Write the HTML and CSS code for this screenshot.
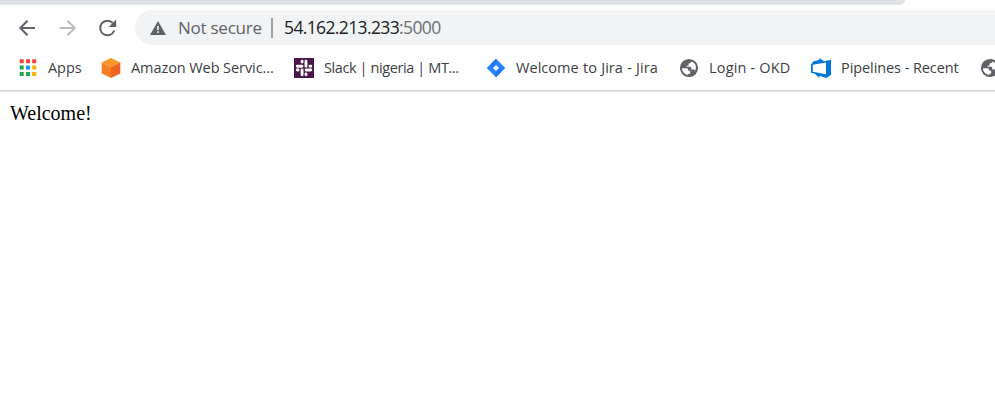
FILE: index.html
```html
<!DOCTYPE html>
<html lang="en">
<head>
<meta charset="utf-8">
<title>54.162.213.233:5000</title>
<link rel="stylesheet" href="styles.css">
</head>
<body>
<svg width="0" height="0" class="defs" aria-hidden="true">
  <symbol id="globe" viewBox="0 0 20 20">
    <circle cx="10" cy="10" r="9.100" fill="#5f6368"/>
    <path d="M3 10.200h4.500c1.200 0 1.500.7 1.500 1.400 0 .9.500 1.100 1.300 1.100h.9v2.200c0 .5-.4.900-1 .9h-.9v1C5.700 16.600 3 13.800 3 10.200zM12.400 3.500c-.5 1.600-1.400 1.900-2.800 1.900v1.500c0 .5-.3.900-.9.900H7.500v1h3.300c1 0 1.500.5 1.500 1.300v1.400h2.300c.8 0 1.200.5 1.300 1.500 2.400-3.700.5-8.200-3.500-9.500z" fill="#fff"/>
  </symbol>
</svg>
<header class="browser">
  <div class="tabstrip"></div>
  <div class="toolbar">
    <svg class="nav" viewBox="0 0 20 20"><path d="M18 10H3.500M10.500 2.800 3.300 10l7.200 7.200" fill="none" stroke="#5f6368" stroke-width="2"/></svg>
    <svg class="nav" viewBox="0 0 20 20"><path d="M2.500 10H17.500M10.500 2.800l7.200 7.200-7.200 7.200" fill="none" stroke="#babcbe" stroke-width="2"/></svg>
    <svg class="nav" viewBox="0 0 20 20"><path d="M17.300 12.500A7.300 7.300 0 1 1 15.800 5" fill="none" stroke="#5f6368" stroke-width="2"/><path d="M19.200 1.600v7.400h-7.400z" fill="#5f6368"/></svg>
    <div class="address">
      <svg class="warning" viewBox="0 0 16 14"><path d="M8 0 16 14H0z" fill="#5f6368"/><path d="M7.200 5h1.600v4H7.200zM7.200 10.300h1.600V12H7.200z" fill="#f1f3f4"/></svg>
      <span class="security">Not secure</span>
      <span class="divider"></span>
      <span class="url">54.162.213.233<span class="port">:5000</span></span>
    </div>
  </div>
  <nav class="bookmarks">
    <a class="bookmark">
      <svg viewBox="0 0 20 20"><path d="M1.700 1.300h4v4h-4zM8 1.300h4v4H8zM14.200 1.300h4v4h-4z" fill="#f44336"/><path d="M1.700 7.600h4v4h-4zM1.700 14h4v4h-4zM8 14h4v4H8z" fill="#2ba24c"/><path d="M8 7.600h4v4H8z" fill="#2196f3"/><path d="M14.200 7.600h4v4h-4zM14.200 14h4v4h-4z" fill="#fbad05"/></svg>
      <span class="label">Apps</span>
    </a>
    <a class="bookmark">
      <svg viewBox="0 0 20 20"><path d="M10 0l9.300 4.500L10 9 .7 4.500z" fill="#fd9827"/><path d="M.7 4.500 10 9v11L.7 15.500z" fill="#f58025"/><path d="M19.300 4.500 10 9v11l9.300-4.500z" fill="#ec6522"/></svg>
      <span class="label">Amazon Web Servic...</span>
    </a>
    <a class="bookmark">
      <svg viewBox="0 0 20 20"><path d="M0 0h20v20H0z" fill="#4a154b"/><path d="M3.300 8.200H8M8.100 3.300v.8M12 3.300v4.900M16.800 8.200h-.8M16.800 12H12.100M12 16.800v-.8M8.100 16.800V12M3.300 12h.8" fill="none" stroke="#fff" stroke-width="2.900" stroke-linecap="round"/></svg>
      <span class="label slack">Slack | nigeria | MT...</span>
    </a>
    <a class="bookmark">
      <svg viewBox="0 0 20 20"><path d="M10 .7 19.300 10 10 19.300.7 10z" fill="#2684ff"/><path d="M10 .7V7L7 10 4.500 6.200zM10 19.300V13l3-3 2.500 3.800z" fill="#1f77ee"/><path d="M10 7l3 3-3 3-3-3z" fill="#fff"/></svg>
      <span class="label jira">Welcome to Jira - Jira</span>
    </a>
    <a class="bookmark">
      <svg viewBox="0 0 20 20"><use href="#globe"/></svg>
      <span class="label login">Login - OKD</span>
    </a>
    <a class="bookmark">
      <svg viewBox="0 0 20 20"><path d="M0 6.400 2.600 3.300 8.200 2V0l5 3.200L20 1.700v15L15.500 20l-7-2.200V20l-4.700-4.200L0 14.800zM1.800 6.800v7l13.200 2.500V4.600z" fill="#0078d7" fill-rule="evenodd"/></svg>
      <span class="label">Pipelines - Recent</span>
    </a>
    <a class="bookmark">
      <svg viewBox="0 0 20 20"><use href="#globe"/></svg>
    </a>
  </nav>
</header>
<main class="page">Welcome!</main>
</body>
</html>
```
FILE: styles.css
```css
body {
  margin: 0;
  overflow: hidden;
  background: #fff;
}

.defs {
  display: none;
}

.browser {
  height: 90px;
  border-bottom: 2px solid #dadce0;
  font-family: "Segoe UI", "Open Sans", sans-serif;
  overflow: hidden;
}

.tabstrip {
  width: 905px;
  height: 5px;
  background: #dee1e6;
  border-bottom-right-radius: 5px;
}

.toolbar {
  display: flex;
  align-items: center;
  gap: 20px;
  height: 35px;
  padding: 5px 0 5px 17px;
}

.nav {
  flex: none;
  width: 20px;
  height: 20px;
}

.address {
  display: flex;
  flex: 1;
  align-items: center;
  height: 35px;
  margin-left: -2px;
  padding-left: 15px;
  border-radius: 18px 0 0 18px;
  background: #f1f3f4;
  font-size: 17.500px;
  line-height: 35px;
  white-space: nowrap;
}

.warning {
  width: 16px;
  height: 14px;
}

.security {
  width: 93px;
  margin-left: 12px;
  color: #5f6368;
  font-size: 17px;
  letter-spacing: -0.250px;
}

.divider {
  width: 2px;
  height: 20px;
  background: #9aa0a6;
}

.url {
  margin-left: 11px;
  color: #202124;
  letter-spacing: -0.630px;
}

.port {
  color: #6b6f74;
}

.bookmarks {
  display: grid;
  grid-template-columns: 83px 193px 192px 193px 132px 169px 20px;
  height: 36px;
  padding-left: 18px;
}

.bookmark {
  display: flex;
  align-items: center;
  gap: 10px;
}

.bookmark svg {
  flex: none;
  width: 20px;
  height: 20px;
}

.label {
  color: #3c4043;
  font-size: 14.500px;
  letter-spacing: -0.080px;
  line-height: 20px;
  white-space: nowrap;
}

.slack {
  letter-spacing: -0.400px;
}

.jira {
  letter-spacing: 0.050px;
  word-spacing: 0.400px;
}

.login {
  letter-spacing: 0.180px;
}

.page {
  padding: 10px;
  color: #000;
  font: 20px/23px "Liberation Serif", serif;
}
```
